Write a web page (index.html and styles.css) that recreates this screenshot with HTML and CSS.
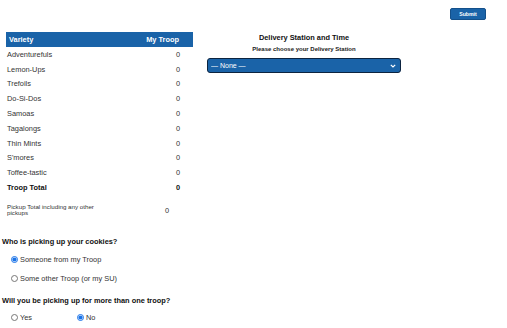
FILE: index.html
```html
<!DOCTYPE html>
<html lang="en">
<head>
    <meta charset="UTF-8">
    <meta name="viewport" content="width=device-width, initial-scale=1.0">
    <title>Cookie Pickup</title>
    <link rel="stylesheet" href="styles.css">
</head>
<body>
    <div class="top-bar">
        <button class="submit-btn" type="button">Submit</button>
    </div>

    <div class="main">
        <div class="left-col">
            <table class="cookie-table">
                <thead>
                    <tr>
                        <th class="col-name">Variety</th>
                        <th class="col-num">My Troop</th>
                    </tr>
                </thead>
                <tbody>
                    <tr><td>Adventurefuls</td><td class="num">0</td></tr>
                    <tr><td>Lemon-Ups</td><td class="num">0</td></tr>
                    <tr><td>Trefoils</td><td class="num">0</td></tr>
                    <tr><td>Do-Si-Dos</td><td class="num">0</td></tr>
                    <tr><td>Samoas</td><td class="num">0</td></tr>
                    <tr><td>Tagalongs</td><td class="num">0</td></tr>
                    <tr><td>Thin Mints</td><td class="num">0</td></tr>
                    <tr><td>S'mores</td><td class="num">0</td></tr>
                    <tr><td>Toffee-tastic</td><td class="num">0</td></tr>
                    <tr class="total-row"><td>Troop Total</td><td class="num">0</td></tr>
                </tbody>
            </table>

            <div class="pickup-total">
                <div class="pickup-label">Pickup Total including any other pickups</div>
                <div class="pickup-value">0</div>
            </div>
        </div>

        <div class="right-col">
            <h2 class="station-title">Delivery Station and Time</h2>
            <p class="station-sub">Please choose your Delivery Station</p>
            <div class="select-wrap">
                <select class="station-select">
                    <option>— None —</option>
                </select>
                <svg class="chevron" width="6" height="4" viewBox="0 0 6 4">
                    <path d="M0.8 0.8 L3 3 L5.2 0.8" fill="none" stroke="#fff" stroke-width="1.2"/>
                </svg>
            </div>
        </div>
    </div>

    <div class="questions">
        <h3 class="question">Who is picking up your cookies?</h3>
        <label class="choice"><input type="radio" name="who" checked> Someone from my Troop</label>
        <label class="choice"><input type="radio" name="who"> Some other Troop (or my SU)</label>

        <h3 class="question second">Will you be picking up for more than one troop?</h3>
        <div class="inline-choices">
            <label class="choice yes"><input type="radio" name="multi"> Yes</label>
            <label class="choice"><input type="radio" name="multi" checked> No</label>
        </div>
    </div>
</body>
</html>
```

FILE: styles.css
```css
* {
    margin: 0;
    padding: 0;
    box-sizing: border-box;
}

body {
    font-family: 'Liberation Sans', Arial, sans-serif;
    font-size: 7.4px;
    color: #333;
    background: #fff;
    width: 507px;
    height: 328px;
    overflow: hidden;
}

.top-bar {
    display: flex;
    justify-content: flex-end;
    padding: 8px 21px 0 0;
}

.submit-btn {
    width: 36px;
    height: 12px;
    background: #1a63a8;
    color: #fff;
    border: 1px solid #14508a;
    border-radius: 2px;
    font-family: inherit;
    font-size: 5.2px;
    font-weight: bold;
    cursor: pointer;
}

.main {
    display: flex;
    padding: 12px 0 0 6px;
}

.left-col {
    width: 187px;
}

.cookie-table {
    width: 187px;
    border-collapse: collapse;
}

.cookie-table th {
    background: #1a63a8;
    color: #fff;
    height: 15px;
    font-weight: bold;
    font-size: 7.4px;
    text-align: left;
    padding: 0 0 0 3px;
}

.cookie-table th.col-num {
    text-align: right;
    padding-right: 14px;
}

.cookie-table td {
    height: 14.8px;
    padding: 0 0 0 1px;
    vertical-align: middle;
}

.cookie-table td.num {
    text-align: right;
    padding-right: 13px;
}

.cookie-table .total-row td {
    font-weight: bold;
    color: #111;
}

.pickup-total {
    display: flex;
    align-items: center;
    margin-top: 9px;
    padding-left: 1px;
}

.pickup-label {
    width: 100px;
    font-size: 6.2px;
    line-height: 6.4px;
}

.pickup-value {
    margin-left: 58px;
}

.right-col {
    width: 194px;
    margin-left: 14px;
    text-align: center;
}

.station-title {
    font-size: 7.4px;
    font-weight: bold;
    color: #111;
    margin-top: 1px;
    line-height: 9px;
}

.station-sub {
    font-size: 6px;
    font-weight: bold;
    color: #222;
    margin-top: 3px;
    line-height: 8px;
}

.select-wrap {
    position: relative;
    margin-top: 5px;
}

.station-select {
    appearance: none;
    -webkit-appearance: none;
    display: block;
    width: 194px;
    height: 15px;
    background: #1a63a8;
    color: #fff;
    border: 1px solid #0c2440;
    border-radius: 3px;
    font-family: inherit;
    font-size: 7px;
    padding: 0 0 0 3px;
    text-align: left;
}

.chevron {
    position: absolute;
    right: 5px;
    top: 5.5px;
}

.questions {
    padding: 20px 0 0 2px;
}

.question {
    font-size: 7.4px;
    font-weight: bold;
    color: #111;
    line-height: 9px;
}

.question.second {
    margin-top: 8px;
}

.choice {
    display: flex;
    align-items: center;
    gap: 2px;
    height: 19px;
    padding-left: 9px;
    color: #333;
}

.choice input {
    width: 7px;
    height: 7px;
    margin: 0;
    accent-color: #1a73e8;
}

.question + .choice {
    margin-top: 4px;
}

.inline-choices {
    display: flex;
    margin-top: 3px;
}

.inline-choices .yes {
    width: 66px;
}
```
